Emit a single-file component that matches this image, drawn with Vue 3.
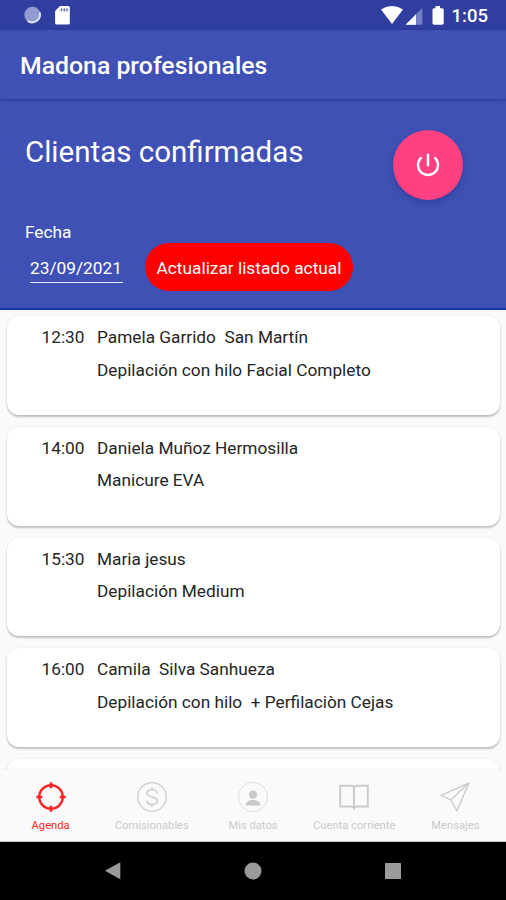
<script setup>
const appointments = [
  { time: '12:30', client: 'Pamela Garrido  San Martín', service: 'Depilación con hilo Facial Completo' },
  { time: '14:00', client: 'Daniela Muñoz Hermosilla', service: 'Manicure EVA' },
  { time: '15:30', client: 'Maria jesus', service: 'Depilación Medium' },
  { time: '16:00', client: 'Camila  Silva Sanhueza', service: 'Depilación con hilo  + Perfilaciòn Cejas' },
  { time: '', client: '', service: '' },
]
const tabs = [
  { id: 'agenda', label: 'Agenda', active: true },
  { id: 'money', label: 'Comisionables' },
  { id: 'user', label: 'Mis datos' },
  { id: 'book', label: 'Cuenta corriente' },
  { id: 'send', label: 'Mensajes' },
]
</script>

<template>
  <div class="screen">
    <div class="status">
      <svg class="status-left" width="50" height="22" viewBox="0 0 50 22">
        <circle cx="10.500" cy="11" r="8.2" fill="#929bd2" />
        <path d="M17.800 8.500A8 8 0 0 1 5.700 17.100" fill="none" stroke="#e4e7f7" stroke-width="1.800" />
        <path d="M38 2h8.200q1.600 0 1.600 1.600v15.300q0 1.600-1.600 1.600H34.700q-1.600 0-1.600-1.600V7z" fill="#fff" />
        <path d="M39.500 4.500v2.800M42.300 4.500v2.800M45 4.500v2.800" stroke="#5360b0" stroke-width="1.500" />
      </svg>
      <div class="status-right">
        <svg width="66" height="22" viewBox="0 0 66 22">
          <path d="M1 5.400Q12 -1.400 23 5.400L12 20z" fill="#fff" />
          <path d="M42.300 4v16.700H25.600z" fill="#7580c4" />
          <path d="M36 10.300v10.400H25.600z" fill="#fff" />
          <path d="M55.500 2h4.500v2.200h2.100q1.600 0 1.600 1.600v13.300q0 1.600-1.600 1.600h-8q-1.600 0-1.600-1.600V5.800q0-1.600 1.600-1.600h1.400z" fill="#fff" />
        </svg>
        <span class="clock">1:05</span>
      </div>
    </div>
    <header class="appbar"><span>Madona profesionales</span></header>
    <section class="hero">
      <div class="hero-top">
        <h1>Clientas confirmadas</h1>
        <button class="power" aria-label="Salir">
          <svg width="30" height="30" viewBox="0 0 24 24" fill="#fff">
            <path d="M13 3h-2v10h2V3zm4.830 2.170l-1.420 1.420C17.990 7.860 19 9.810 19 12c0 3.870-3.130 7-7 7s-7-3.130-7-7c0-2.190 1.010-4.140 2.580-5.420L6.170 5.170C4.230 6.820 3 9.260 3 12c0 4.970 4.030 9 9 9s9-4.030 9-9c0-2.740-1.230-5.180-3.170-6.830z" />
          </svg>
        </button>
      </div>
      <div class="label">Fecha</div>
      <div class="hero-row">
        <span class="date">23/09/2021</span>
        <button class="refresh">Actualizar listado actual</button>
      </div>
    </section>
    <main class="list">
      <article v-for="(a, i) in appointments" :key="i" class="card">
        <span class="time">{{ a.time }}</span>
        <div class="info">
          <p>{{ a.client }}</p>
          <p>{{ a.service }}</p>
        </div>
      </article>
    </main>
    <nav class="tabs">
      <div v-for="t in tabs" :key="t.id" class="tab" :class="{ active: t.active }">
        <svg width="32" height="32" viewBox="0 0 32 32" fill="none" stroke="currentColor">
          <template v-if="t.id === 'agenda'">
            <circle cx="16" cy="16" r="11.800" stroke-width="2.400" />
            <path d="M16 1.300v6M16 24.700v6M1.300 16h6M24.700 16h6" stroke-width="2.600" />
          </template>
          <template v-else-if="t.id === 'money'">
            <circle cx="16" cy="16" r="14.300" stroke-width="1.200" />
            <path d="M21.200 12.500C21 9.800 18.800 8.600 16 8.600c-3 0-5.100 1.500-5.100 3.700 0 4.900 10.400 2.500 10.400 7.500 0 2.200-2.200 3.700-5.200 3.700-3.100 0-5.300-1.500-5.400-4.100M16 6v2.600M16 23.500v2.600" stroke-width="1.400" />
          </template>
          <template v-else-if="t.id === 'user'">
            <circle cx="16" cy="16" r="14.600" stroke-width=".6" />
            <circle cx="16" cy="13.600" r="4.200" fill="currentColor" stroke="none" />
            <path d="M8.500 24.500c0-4 4.200-5.500 7.500-5.500s7.500 1.500 7.500 5.500z" fill="currentColor" stroke="none" />
          </template>
          <template v-else-if="t.id === 'book'">
            <path d="M16 6.200Q15.200 4.700 13.500 4.700H2.200v20.800h11.300q1.700 0 2.500 1.200.8-1.200 2.500-1.200h11.300V4.700H18.500Q16.800 4.700 16 6.200zv22.200" stroke-width="1.900" />
          </template>
          <template v-else>
            <path d="M30 1.800L2 14.500l10 4.300L17.800 30zL12 18.800" stroke-width="1.300" stroke-linejoin="round" />
          </template>
        </svg>
        <span>{{ t.label }}</span>
      </div>
    </nav>
    <div class="system">
      <svg width="18" height="20" viewBox="0 0 18 20"><path d="M16.300 1.200v17L1 9.700z" fill="#9b9b9b" /></svg>
      <svg width="18" height="20" viewBox="0 0 18 20"><circle cx="9" cy="10" r="8.500" fill="#9b9b9b" /></svg>
      <svg width="18" height="20" viewBox="0 0 18 20"><rect x="1" y="2" width="16" height="16" rx=".5" fill="#9b9b9b" /></svg>
    </div>
  </div>
</template>

<style>
body { margin: 0; }
</style>

<style scoped>
.screen {
  width: 506px;
  height: 900px;
  display: flex;
  flex-direction: column;
  overflow: hidden;
  background: #fafafa;
  font-family: Roboto, sans-serif;
}
.status {
  flex: 0 0 30px;
  height: 30px;
  min-height: 0;
  overflow: hidden;
  display: flex;
  justify-content: space-between;
  background: #303f9f;
  padding: 0 18px 0 22px;
}
.status svg { margin-top: 4px; }
.status-right { display: flex; gap: 6px; }
.clock { color: #fff; font-size: 18.5px; font-weight: 500; line-height: 33px; }
.appbar {
  flex: 0 0 69px;
  display: flex;
  align-items: center;
  background: #3f51b5;
  color: #fff;
  padding: 2px 20px 0;
  box-sizing: border-box;
  font-size: 24.8px;
  font-weight: 500;
  z-index: 1;
  box-shadow: 0 1px 3px rgba(10, 20, 80, .45);
}
.hero {
  flex: 0 0 211px;
  box-sizing: border-box;
  background: #3f51b5;
  border-bottom: 2px solid #1634a8;
  color: #fff;
  padding: 31px 43px 0 25px;
}
.hero-top { display: flex; justify-content: space-between; height: 92px; }
h1 { margin: 0; font-size: 29.5px; font-weight: 400; line-height: 45px; }
button { border: 0; padding: 0; font-family: inherit; }
.power {
  width: 70px;
  height: 70px;
  border-radius: 50%;
  background: #ff4081;
  display: flex;
  align-items: center;
  justify-content: center;
  box-shadow: 0 3px 6px rgba(20, 30, 100, .3);
}
.label { font-size: 17.3px; line-height: 21px; }
.hero-row { display: flex; gap: 22px; padding-left: 5px; }
.date {
  width: 93px;
  height: 40px;
  box-sizing: border-box;
  border-bottom: 1.5px solid #e6e9f7;
  font-size: 17.3px;
  line-height: 50px;
  white-space: nowrap;
}
.refresh {
  width: 208px;
  height: 48px;
  border-radius: 24px;
  background: #f00;
  color: #fff;
  font-size: 17.3px;
  line-height: 50px;
}
.list {
  flex: 0 0 460px;
  box-sizing: border-box;
  overflow: hidden;
  padding: 6.4px 6px 0 7px;
  display: flex;
  flex-direction: column;
  gap: 12.2px;
}
.card {
  flex: 0 0 98.500px;
  box-sizing: border-box;
  display: flex;
  background: #fff;
  border-radius: 12px;
  box-shadow: 0 2px 2px rgba(0, 0, 0, .22), 0 0 2px rgba(0, 0, 0, .1);
  padding: 5px 0 0 34.5px;
  font-size: 17.25px;
  color: #252525;
}
.time { width: 55.5px; line-height: 32px; }
.info p { margin: 0; line-height: 32.300px; white-space: pre; }
.tabs {
  flex: 0 0 72px;
  display: grid;
  grid-template-columns: repeat(5, 1fr);
  background: #fafafa;
  border-bottom: 1px solid #ccc;
  box-sizing: border-box;
  z-index: 1;
  box-shadow: 0 0 2px rgba(0, 0, 0, .08);
}
.tab {
  display: flex;
  flex-direction: column;
  align-items: center;
  padding-top: 11px;
  color: #c9c9c9;
  font-size: 11.2px;
  white-space: nowrap;
}
.tab span { line-height: 14px; margin-top: 6px; }
.tab.active { color: #fb2626; }
.system {
  flex: 0 0 58px;
  background: #000;
  display: flex;
  align-items: center;
  justify-content: center;
  gap: 122px;
}
</style>
